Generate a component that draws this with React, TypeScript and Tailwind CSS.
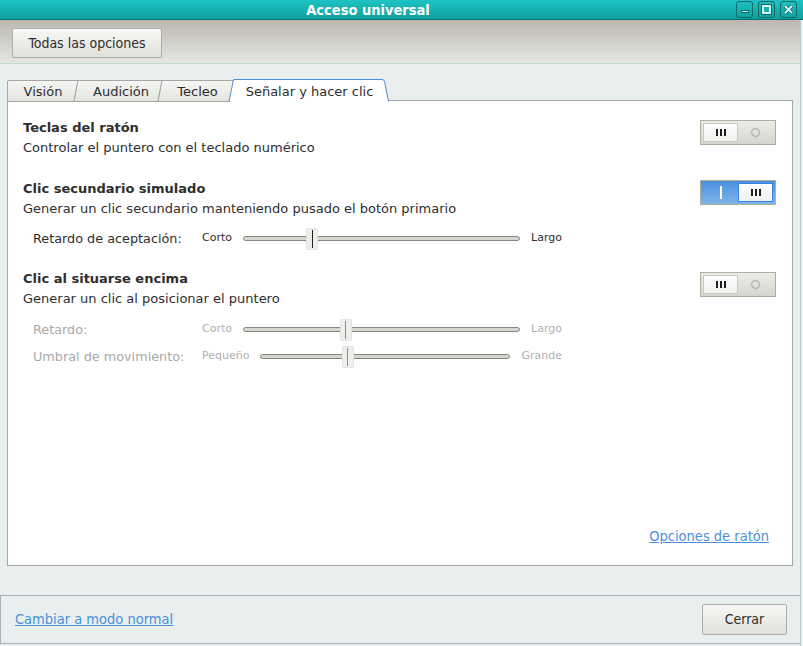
import React from 'react'

const COND = { fontFamily: '"DejaVu Sans Condensed", "DejaVu Sans", sans-serif', fontStretch: 'condensed' as const }

function Grip() {
  return (
    <div className="flex gap-[2px]">
      <div className="w-[2px] h-[7px] bg-[#1e1e1e]" />
      <div className="w-[2px] h-[7px] bg-[#1e1e1e]" />
      <div className="w-[2px] h-[7px] bg-[#1e1e1e]" />
    </div>
  )
}

function Switch({ on, top }: { on: boolean; top: string }) {
  if (on) {
    return (
      <div className={`${top} w-[76px] h-[25px] border border-[#a9b19e] bg-gradient-to-b from-[#4a8fdd] to-[#80b4eb] flex items-center p-[2px]`}>
        <div className="flex-1 flex justify-center">
          <div className="w-[2px] h-[13px] bg-white" />
        </div>
        <div className="w-[35px] h-[19px] bg-gradient-to-b from-white to-[#eeeeec] border border-[#3a82dc] flex items-center justify-center">
          <Grip />
        </div>
      </div>
    )
  }
  return (
    <div className={`${top} w-[76px] h-[25px] border border-[#a9b19e] bg-gradient-to-b from-[#ececE8] to-[#d5d5cf] flex items-center p-[2px]`}>
      <div className="w-[35px] h-[19px] bg-gradient-to-b from-white to-[#efefec] border border-[#c9cbc0] flex items-center justify-center">
        <Grip />
      </div>
      <div className="flex-1 flex justify-center">
        <div className="w-[9px] h-[9px] rounded-full border border-[#a4a4a4]" />
      </div>
    </div>
  )
}

function Slider({ label, lo, hi, pos, disabled }: { label: string; lo: string; hi: string; pos: string; disabled?: boolean }) {
  return (
    <div className="flex items-center h-[27px] pl-[10px]">
      <div className={`w-[169px] text-[12.8px] ${disabled ? 'text-[#a9a9a9]' : 'text-[#2e2e2e]'}`}>{label}</div>
      <div className="w-[360px] flex items-center gap-[11px]">
        <span className={`text-[11px] ${disabled ? 'text-[#b0b0b0]' : 'text-[#2e2e2e]'}`}>{lo}</span>
        <div className="relative flex-1 h-[20px] flex items-center">
          <div className="w-full h-[5px] rounded-full border border-[#85857f] bg-[#d6d6d0]" />
          <div className={`absolute top-[-1px] ${pos} -translate-x-1/2 w-[12px] h-[22px] rounded-[2px] bg-[#eeeeec] border border-[#e2e2de] flex justify-center items-center`}>
            <div className={`w-px h-[18px] ${disabled ? 'bg-[#8a8a8a]' : 'bg-[#222]'}`} />
          </div>
        </div>
        <span className={`text-[11px] ${disabled ? 'text-[#b0b0b0]' : 'text-[#2e2e2e]'}`}>{hi}</span>
      </div>
    </div>
  )
}

function TabStrip() {
  return (
    <div className="relative h-[22px] w-[390px]">
      <svg className="absolute left-0 top-0" width="390" height="23" viewBox="0 0 390 23">
        <defs>
          <linearGradient id="tg" x1="0" y1="0" x2="0" y2="1">
            <stop offset="0" stopColor="#f6f6f4" />
            <stop offset="1" stopColor="#e3e3df" />
          </linearGradient>
        </defs>
        <path d="M0.5 22.5 V3 Q0.5 1.5 2 1.5 H71 L67 22.5 Z" fill="url(#tg)" stroke="#a6a6a6" />
        <path d="M67 22.5 L71 1.5 H155 L151 22.5 Z" fill="url(#tg)" stroke="#a6a6a6" />
        <path d="M151 22.5 L155 1.5 H228 L224 22.5 Z" fill="url(#tg)" stroke="#a6a6a6" />
        <path d="M222 22.5 L226.5 0.5 H375 Q377 0.5 377.5 2.5 L381.5 22.5" fill="#ffffff" stroke="#4d8fdb" />
      </svg>
      <div className="relative flex h-[22px] items-center text-[13px] text-[#2e2e2e]">
        <div className="w-[72px] text-center pt-[3px]">Visión</div>
        <div className="w-[84px] text-center pt-[3px]">Audición</div>
        <div className="w-[69px] text-center pt-[3px]">Tecleo</div>
        <div className="w-[155px] text-center pt-[3px]">Señalar y hacer clic</div>
      </div>
    </div>
  )
}

export default function App() {
  return (
    <div className="w-[803px] h-[646px] flex flex-col bg-[#e9efee] overflow-hidden" style={{ fontFamily: '"DejaVu Sans", sans-serif' }}>
      {/* barra de título */}
      <div className="h-[20px] flex items-center bg-gradient-to-b from-[#1ec3c3] to-[#0f9f9d] border-b border-[#0b6e6c]">
        <div className="flex-1 text-center text-white font-bold text-[14.5px] leading-[18px]" style={COND}>Acceso universal</div>
        <div className="flex gap-[5px] pr-[6px]">
          <div className="w-[17px] h-[17px] rounded-[3px] border border-[#0c6a68] flex items-end justify-center pb-[4px]">
            <div className="w-[8px] h-[3px] bg-[#d8f2f2] border border-[#0c6a68]" />
          </div>
          <div className="w-[17px] h-[17px] rounded-[3px] border border-[#0c6a68] flex items-center justify-center">
            <div className="w-[9px] h-[9px] border-2 border-[#d8f2f2] outline outline-1 outline-[#0c6a68]" />
          </div>
          <div className="w-[17px] h-[17px] rounded-[3px] border border-[#0c6a68] flex items-center justify-center">
            <svg width="11" height="11" viewBox="0 0 11 11">
              <path d="M2 2 L9 9 M9 2 L2 9" stroke="#0c6a68" strokeWidth="3.4" />
              <path d="M2 2 L9 9 M9 2 L2 9" stroke="#e0f4f4" strokeWidth="1.8" />
            </svg>
          </div>
        </div>
      </div>

      <div className="flex-1 flex flex-col border-r border-[#b9cdcd] mr-[2px]">
        {/* barra de herramientas */}
        <div className="h-[44px] flex items-center pl-[12px] bg-gradient-to-b from-[#bab8af] to-[#e6e6e2] border-b border-[#c4d8d8]">
          <button className="h-[30px] w-[150px] mt-[3px] rounded-[2px] border border-[#aeaea8] bg-gradient-to-b from-[#f8f8f6] to-[#dfdfdb] text-[14px] text-[#2e2e2e]" style={COND}>
            Todas las opciones
          </button>
        </div>

        {/* pestañas y panel */}
        <div className="pl-[7px] pr-[7px] pt-[15px]">
          <TabStrip />
          <div className="h-[466px] bg-white border border-[#a6a6a6] border-t-0 -mt-px flex flex-col">
            <div className="h-px bg-[#a6a6a6] flex">
              <div className="w-[222px]" />
              <div className="w-[159px] bg-white" />
            </div>
            <div className="pl-[15px] pr-[16px] pt-[17px]">
              <div className="flex justify-between">
                <div className="leading-[20px] text-[13px] text-[#2e2e2e]">
                  <div className="font-bold">Teclas del ratón</div>
                  <div>Controlar el puntero con el teclado numérico</div>
                </div>
                <Switch on={false} top="mt-[2px]" />
              </div>

              <div className="flex justify-between mt-[21px]">
                <div className="leading-[20px] text-[13px] text-[#2e2e2e]">
                  <div className="font-bold">Clic secundario simulado</div>
                  <div>Generar un clic secundario manteniendo pusado el botón primario</div>
                </div>
                <Switch on={true} top="mt-[1px]" />
              </div>
              <div className="mt-[6px]">
                <Slider label="Retardo de aceptación:" lo="Corto" hi="Largo" pos="left-[25%]" />
              </div>

              <div className="flex justify-between mt-[17px]">
                <div className="leading-[20px] text-[13px] text-[#2e2e2e]">
                  <div className="font-bold">Clic al situarse encima</div>
                  <div>Generar un clic al posicionar el puntero</div>
                </div>
                <Switch on={false} top="mt-[3px]" />
              </div>
              <div className="mt-[7px]">
                <Slider label="Retardo:" lo="Corto" hi="Largo" pos="left-[37%]" disabled />
                <Slider label="Umbral de movimiento:" lo="Pequeño" hi="Grande" pos="left-[35%]" disabled />
              </div>
            </div>
            <div className="flex-1" />
            <div className="flex justify-end pr-[23px] pb-[17px]">
              <span className="text-[14.5px] text-[#4a90d9] underline" style={COND}>Opciones de ratón</span>
            </div>
          </div>
        </div>

        <div className="flex-1" />

        {/* pie */}
        <div className="h-[49px] mb-[2px] border border-[#a3b5b5] border-r-0 flex items-center justify-between pl-[14px] pr-[13px]">
          <span className="text-[14.5px] text-[#4a90d9] underline" style={COND}>Cambiar a modo normal</span>
          <button className="h-[31px] w-[85px] rounded-[2px] border border-[#aeaea8] bg-gradient-to-b from-[#f8f8f6] to-[#dfdfdb] text-[14px] text-[#2e2e2e]" style={COND}>
            Cerrar
          </button>
        </div>
      </div>
    </div>
  )
}
